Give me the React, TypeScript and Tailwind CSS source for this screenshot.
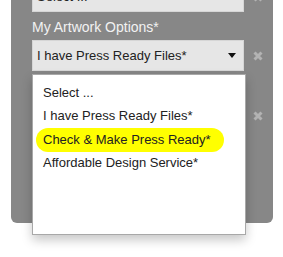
import React from 'react';

function XIcon() {
  return (
    <svg width="10" height="10" viewBox="0 0 10 10" className="shrink-0">
      <path d="M1.5 1.5 L8.5 8.5 M8.5 1.5 L1.5 8.5" stroke="#b3b3b3" strokeWidth="3" strokeLinecap="butt" />
    </svg>
  );
}

function FakeSelect({ value, arrow = true }: { value: string; arrow?: boolean }) {
  return (
    <div className="w-[212px] h-[31px] bg-[#e6e6e6] border border-[#d6d6d6] flex items-center pl-[4px] pr-[7px] text-[13px] text-[#222] shrink-0">
      <span className="flex-1 truncate">{value}</span>
      {arrow && (
        <svg width="8" height="5" viewBox="0 0 8 5">
          <path d="M0 0 H8 L4 5 Z" fill="#111" />
        </svg>
      )}
    </div>
  );
}

export default function App() {
  const options = ['Select ...', 'I have Press Ready Files*', 'Check & Make Press Ready*', 'Affordable Design Service*'];

  return (
    <div className="relative w-[283px] h-[257px] overflow-hidden bg-white text-[14px] leading-[16px] font-['Liberation_Sans',Arial,sans-serif]">
      {/* gray form panel */}
      <div className="ml-[11px] w-[262px] h-[223px] bg-[#878787] rounded-b-[6px] pl-[21px] flex flex-col">
        <div className="flex items-center gap-[9px] -mt-[19px]">
          <FakeSelect value="Select ..." arrow={false} />
          <XIcon />
        </div>
        <div className="mt-[7px] text-[#f2f2f2]">My Artwork Options*</div>
        <div className="flex items-center gap-[9px] mt-[5px]">
          <FakeSelect value="I have Press Ready Files*" />
          <XIcon />
        </div>
        <div className="flex items-center gap-[9px] mt-[29px]">
          <div className="w-[212px] h-[31px]" />
          <XIcon />
        </div>
        <div className="mt-[22px] w-[2px] h-[47px] bg-[#d4006f]" />
      </div>

      {/* open dropdown list */}
      <div className="absolute left-[32px] top-[74px] w-[214px] h-[161px] bg-white border border-[#a8a8a8] shadow-[0_5px_10px_rgba(0,0,0,0.22)] pt-[6px] text-[13px] text-[#222]">
        {options.map((o, i) => (
          <div key={o} className="relative h-[23.5px] flex items-center pl-[10px]">
            {i === 2 && (
              <div className="absolute left-[3px] w-[188px] top-0 bottom-0 bg-[#ffff00] rounded-[12px] blur-[0.6px]" />
            )}
            <span className="relative">{o}</span>
          </div>
        ))}
      </div>
    </div>
  );
}
